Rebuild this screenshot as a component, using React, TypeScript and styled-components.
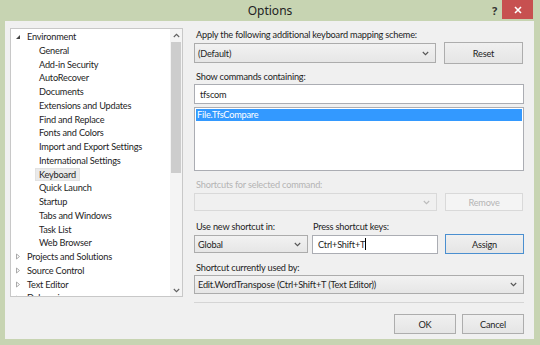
import React from "react";
import styled, { createGlobalStyle } from "styled-components";

const Global = createGlobalStyle`
  html, body { margin: 0; padding: 0; }
  body { font-family: "Lato", "Noto Sans", sans-serif; font-size: 9.2px; letter-spacing: -0.2px; color: #1e1e1e; }
  * { box-sizing: border-box; }
`;

const Frame = styled.div`
  width: 540px;
  height: 345px;
  background: #c7d4b2;
  display: flex;
  flex-direction: column;
  overflow: hidden;
`;

const TitleBar = styled.div`
  height: 21px;
  display: flex;
  align-items: flex-start;
  position: relative;
`;

const Title = styled.div`
  flex: 1;
  text-align: center;
  font-family: "Noto Sans", sans-serif;
  font-size: 12px;
  letter-spacing: 0;
  line-height: 22px;
  color: #222;
`;

const Help = styled.div`
  position: absolute;
  right: 43px;
  top: 3px;
  font-family: "Noto Sans", sans-serif;
  font-size: 11px;
  font-weight: bold;
  color: #333;
`;

const Close = styled.div`
  position: absolute;
  right: 7px;
  top: 0;
  width: 31px;
  height: 19px;
  background: #c75050;
  display: flex;
  align-items: center;
  justify-content: center;
`;

const Body = styled.div`
  margin: 0 6px 6px 5px;
  flex: 1;
  background: #f0f0f0;
  padding: 7px 10px 0 5px;
  display: flex;
  gap: 11px;
`;

const Tree = styled.div`
  width: 173px;
  height: 269px;
  background: #fff;
  border: 1px solid #c8c8c8;
  display: flex;
  overflow: hidden;
`;

const TreeItems = styled.div`
  flex: 1;
  padding-top: 1px;
  overflow: hidden;
`;

const TreeRow = styled.div<{ $depth: number }>`
  height: 13.75px;
  line-height: 13.75px;
  padding-left: ${(p) => (p.$depth ? 24 : 2)}px;
  display: flex;
  align-items: center;
  white-space: nowrap;
`;

const Expander = styled.span`
  width: 9px;
  display: inline-flex;
  align-items: center;
  justify-content: center;
  margin-right: 1px;
`;

const ItemText = styled.span<{ $sel?: boolean }>`
  padding: 0 3px;
  background: ${(p) => (p.$sel ? "#eaeaea" : "transparent")};
  border: 1px solid ${(p) => (p.$sel ? "#e2e2e2" : "transparent")};
  line-height: 11.5px;
`;

const ScrollBar = styled.div`
  width: 12px;
  background: #f4f4f4;
  display: flex;
  flex-direction: column;
  align-items: center;
`;

const ScrollArrow = styled.div`
  height: 12px;
  display: flex;
  align-items: center;
  justify-content: center;
`;

const Thumb = styled.div`
  width: 10px;
  height: 131px;
  background: #cdcdcd;
  margin-top: 1px;
`;

const ScrollFill = styled.div`
  flex: 1;
`;

const Right = styled.div`
  width: 330px;
  display: flex;
  flex-direction: column;
`;

const Label = styled.div<{ $disabled?: boolean; $mt?: number }>`
  height: 12px;
  line-height: 12px;
  padding-left: 2px;
  margin-top: ${(p) => p.$mt ?? 0}px;
  color: ${(p) => (p.$disabled ? "#b4b4b4" : "#1e1e1e")};
  white-space: nowrap;
`;

const Row = styled.div<{ $mt?: number }>`
  display: flex;
  align-items: center;
  gap: 8px;
  margin-top: ${(p) => p.$mt ?? 0}px;
`;

const Combo = styled.div<{ $w: number; $h: number; $disabled?: boolean }>`
  width: ${(p) => p.$w}px;
  height: ${(p) => p.$h}px;
  border: 1px solid ${(p) => (p.$disabled ? "#d9d9d9" : "#acacac")};
  background: ${(p) => (p.$disabled ? "#f0f0f0" : "linear-gradient(#f2f2f2, #e6e6e6)")};
  display: flex;
  align-items: center;
  padding: 0 6px 0 3px;
  flex-shrink: 0;
`;

const ComboText = styled.span`
  flex: 1;
  white-space: nowrap;
`;

const Input = styled.div<{ $w: number; $h: number }>`
  width: ${(p) => p.$w}px;
  height: ${(p) => p.$h}px;
  border: 1px solid #abadb3;
  background: #fff;
  display: flex;
  align-items: center;
  padding-left: 5px;
  flex-shrink: 0;
`;

const Caret = styled.span`
  display: inline-block;
  width: 1px;
  height: 12px;
  background: #000;
`;

const Button = styled.div<{ $w: number; $h: number; $disabled?: boolean; $focus?: boolean }>`
  width: ${(p) => p.$w}px;
  height: ${(p) => p.$h}px;
  border: 1px solid ${(p) => (p.$focus ? "#4a8fd0" : p.$disabled ? "#d9d9d9" : "#adadad")};
  background: ${(p) => (p.$disabled ? "#f4f4f4" : "linear-gradient(#f0f0f0, #e5e5e5)")};
  color: ${(p) => (p.$disabled ? "#b4b4b4" : "#1e1e1e")};
  display: flex;
  align-items: center;
  justify-content: center;
  flex-shrink: 0;
`;

const ListBox = styled.div`
  height: 64px;
  margin-top: 3px;
  border: 1px solid #abadb3;
  background: #fff;
  padding: 1px;
`;

const ListItem = styled.div<{ $sel?: boolean }>`
  height: 12px;
  line-height: 12px;
  padding-left: 1px;
  background: ${(p) => (p.$sel ? "#3399ff" : "transparent")};
  color: ${(p) => (p.$sel ? "#fff" : "#1e1e1e")};
`;

const Separator = styled.div`
  height: 1px;
  background: #d5d5d5;
  margin-top: 8px;
`;

const Footer = styled.div`
  display: flex;
  justify-content: flex-end;
  gap: 6px;
  margin-top: 11px;
`;

const Chevron = ({ color = "#555" }: { color?: string }) => (
  <svg width="7" height="5" viewBox="0 0 7 5">
    <path d="M0.8 1 L3.5 3.7 L6.2 1" fill="none" stroke={color} strokeWidth="1.1" />
  </svg>
);

const UpChevron = () => (
  <svg width="7" height="5" viewBox="0 0 7 5">
    <path d="M0.8 4 L3.5 1.3 L6.2 4" fill="none" stroke="#606060" strokeWidth="1.1" />
  </svg>
);

const ExpandedArrow = () => (
  <svg width="6" height="6" viewBox="0 0 6 6">
    <path d="M5 1 L5 5 L1 5 Z" fill="#444" />
  </svg>
);

const CollapsedArrow = () => (
  <svg width="6" height="7" viewBox="0 0 6 7">
    <path d="M1.5 1 L4.5 3.5 L1.5 6 Z" fill="none" stroke="#a0a0a0" strokeWidth="0.9" />
  </svg>
);

type Item = { text: string; depth: number; expanded?: boolean; sel?: boolean };

const items: Item[] = [
  { text: "Environment", depth: 0, expanded: true },
  { text: "General", depth: 1 },
  { text: "Add-in Security", depth: 1 },
  { text: "AutoRecover", depth: 1 },
  { text: "Documents", depth: 1 },
  { text: "Extensions and Updates", depth: 1 },
  { text: "Find and Replace", depth: 1 },
  { text: "Fonts and Colors", depth: 1 },
  { text: "Import and Export Settings", depth: 1 },
  { text: "International Settings", depth: 1 },
  { text: "Keyboard", depth: 1, sel: true },
  { text: "Quick Launch", depth: 1 },
  { text: "Startup", depth: 1 },
  { text: "Tabs and Windows", depth: 1 },
  { text: "Task List", depth: 1 },
  { text: "Web Browser", depth: 1 },
  { text: "Projects and Solutions", depth: 0 },
  { text: "Source Control", depth: 0 },
  { text: "Text Editor", depth: 0 },
  { text: "Debugging", depth: 0 },
];

export default function App() {
  return (
    <Frame>
      <Global />
      <TitleBar>
        <Title>Options</Title>
        <Help>?</Help>
        <Close>
          <svg width="8" height="8" viewBox="0 0 8 8">
            <path d="M1 1 L7 7 M7 1 L1 7" stroke="#fff" strokeWidth="1.6" />
          </svg>
        </Close>
      </TitleBar>
      <Body>
        <Tree>
          <TreeItems>
            {items.map((it) => (
              <TreeRow key={it.text} $depth={it.depth}>
                {it.depth === 0 && (
                  <Expander>{it.expanded ? <ExpandedArrow /> : <CollapsedArrow />}</Expander>
                )}
                <ItemText $sel={it.sel}>{it.text}</ItemText>
              </TreeRow>
            ))}
          </TreeItems>
          <ScrollBar>
            <ScrollArrow>
              <UpChevron />
            </ScrollArrow>
            <Thumb />
            <ScrollFill />
            <ScrollArrow>
              <Chevron color="#606060" />
            </ScrollArrow>
          </ScrollBar>
        </Tree>
        <Right>
          <Label $mt={1}>Apply the following additional keyboard mapping scheme:</Label>
          <Row $mt={1}>
            <Combo $w={242} $h={20}>
              <ComboText>(Default)</ComboText>
              <Chevron />
            </Combo>
            <Button $w={79} $h={22}>Reset</Button>
          </Row>
          <Label $mt={7}>Show commands containing:</Label>
          <Input $w={330} $h={20} style={{ marginTop: 1 }}>tfscom</Input>
          <ListBox>
            <ListItem $sel>File.TfsCompare</ListItem>
          </ListBox>
          <Label $mt={8} $disabled>Shortcuts for selected command:</Label>
          <Row $mt={2}>
            <Combo $w={243} $h={18} $disabled>
              <ComboText />
              <Chevron color="#bbb" />
            </Combo>
            <Button $w={78} $h={18} $disabled>Remove</Button>
          </Row>
          <Row $mt={10} style={{ gap: 0 }}>
            <Label style={{ width: 117 }}>Use new shortcut in:</Label>
            <Label>Press shortcut keys:</Label>
          </Row>
          <Row $mt={1} style={{ gap: 0 }}>
            <Combo $w={114} $h={18}>
              <ComboText>Global</ComboText>
              <Chevron />
            </Combo>
            <Input $w={126} $h={19} style={{ marginLeft: 4 }}>
              Ctrl+Shift+T<Caret />
            </Input>
            <Button $w={79} $h={20} $focus style={{ marginLeft: 7 }}>Assign</Button>
          </Row>
          <Label $mt={8}>Shortcut currently used by:</Label>
          <Combo $w={330} $h={19} style={{ marginTop: 1 }}>
            <ComboText>Edit.WordTranspose (Ctrl+Shift+T (Text Editor))</ComboText>
            <Chevron />
          </Combo>
          <Separator />
          <Footer>
            <Button $w={62} $h={20}>OK</Button>
            <Button $w={62} $h={20}>Cancel</Button>
          </Footer>
        </Right>
      </Body>
    </Frame>
  );
}
